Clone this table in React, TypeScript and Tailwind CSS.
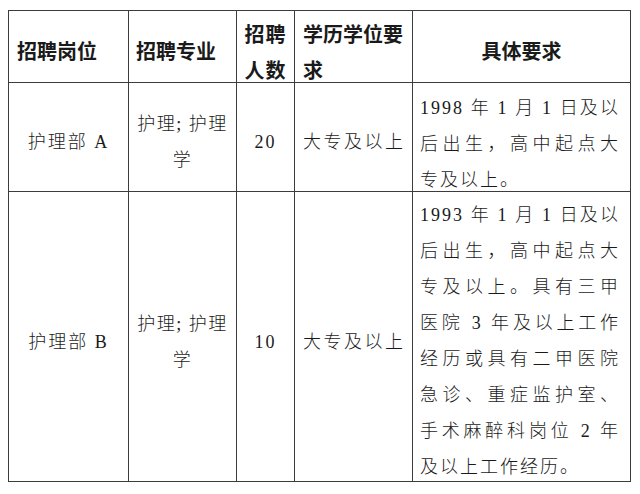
import React from "react";

const bodyFont = { fontFamily: '"Liberation Serif", "Noto Sans CJK SC", serif' };
const headFont = { fontFamily: '"Noto Sans CJK SC", "Noto Sans", sans-serif' };

const rowA = ["1998 年 1 月 1 日及以", "后出生，高中起点大", "专及以上。"];
const rowB = [
  "1993 年 1 月 1 日及以",
  "后出生，高中起点大",
  "专及以上。具有三甲",
  "医院 3 年及以上工作",
  "经历或具有二甲医院",
  "急诊、重症监护室、",
  "手术麻醉科岗位 2 年",
  "及以上工作经历。",
];

const Lines: React.FC<{ lines: string[]; shift: string }> = ({ lines, shift }) => (
  <div className={`whitespace-nowrap tracking-[2px] ${shift}`}>
    {lines.map((l, i) => (
      <div
        key={i}
        className={i === lines.length - 1 ? "text-left" : "text-justify [text-align-last:justify]"}
      >
        {l}
      </div>
    ))}
  </div>
);

const App: React.FC = () => {
  const cell = "border border-[#3c3c3c] align-middle pb-0";
  const rows = [
    { post: "护理部 A", count: "20", lines: rowA, h: "h-[109px]", shift: "pt-[7px] -mb-[8px]" },
    { post: "护理部 B", count: "10", lines: rowB, h: "h-[290px]", shift: "pt-[5px] -mb-[7px]" },
  ];

  return (
    <div className="w-[640px] h-[494px] bg-white pt-[10px] pl-[8px]">
      <table className="border-collapse table-fixed w-[622px] text-[#1a1a1a]">
        <colgroup>
          <col className="w-[120px]" />
          <col className="w-[108px]" />
          <col className="w-[58px]" />
          <col className="w-[118px]" />
          <col className="w-[218px]" />
        </colgroup>
        <thead>
          <tr className="h-[72px] text-[20px] leading-[36px] font-medium" style={headFont}>
            <th className={`${cell} text-left pl-[8px] pr-0 pt-[9px]`}>招聘岗位</th>
            <th className={`${cell} text-left pl-[7px] pr-0 pt-[9px]`}>招聘专业</th>
            <th className={`${cell} text-center px-0 pt-0 tracking-[1px]`}>
              <div className="pt-[4px] -mb-[6px]">
                招聘
                <br />
                人数
              </div>
            </th>
            <th className={`${cell} text-left pl-[8px] pr-0 pt-0`}>
              <div className="pt-[4px] -mb-[6px]">
                学历学位要
                <br />
                求
              </div>
            </th>
            <th className={`${cell} text-center px-0 pt-[9px]`}>具体要求</th>
          </tr>
        </thead>
        <tbody className="text-[18px] leading-[36px] tracking-[2px] font-light" style={bodyFont}>
          {rows.map((r) => (
            <tr key={r.post} className={r.h}>
              <td className={`${cell} text-center px-0 pt-[10px]`}>{r.post}</td>
              <td className={`${cell} text-center px-0 pt-[10px] tracking-[1.5px]`}>
                护理; 护理
                <br />
                学
              </td>
              <td className={`${cell} text-center px-0 pt-[10px]`}>{r.count}</td>
              <td className={`${cell} text-left pl-[8px] pr-0 pt-[10px] tracking-[2.5px]`}>大专及以上</td>
              <td className="border border-[#3c3c3c] align-top p-0">
                <div className="pl-[7px] pr-[10px]">
                  <Lines lines={r.lines} shift={r.shift} />
                </div>
              </td>
            </tr>
          ))}
        </tbody>
      </table>
    </div>
  );
};

export default App;
